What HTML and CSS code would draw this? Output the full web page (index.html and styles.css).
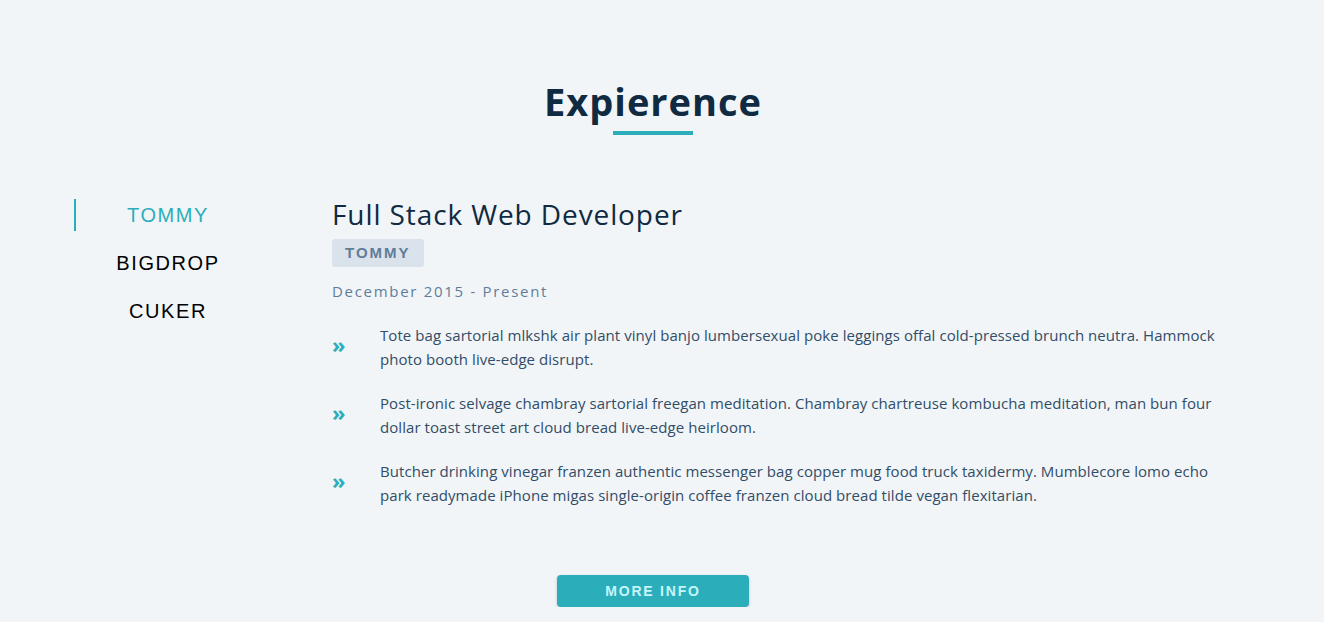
FILE: index.html
```html
<!DOCTYPE html>
<html lang="en">
<head>
<meta charset="utf-8">
<title>Experience</title>
<link rel="stylesheet" href="styles.css">
</head>
<body>
<section class="jobs">
  <h2 class="heading">Expierence</h2>
  <div class="underline"></div>
  <div class="jobs-center">
    <div class="btn-container">
      <button class="job-btn active-btn">TOMMY</button>
      <button class="job-btn">BIGDROP</button>
      <button class="job-btn">CUKER</button>
    </div>
    <article class="job-info">
      <h3 class="job-title">Full Stack Web Developer</h3>
      <h4 class="company">TOMMY</h4>
      <p class="job-date">December 2015 - Present</p>
      <div class="job-desc">
        <span class="job-icon">&raquo;</span>
        <p>Tote bag sartorial mlkshk air plant vinyl banjo lumbersexual poke leggings offal cold-pressed brunch neutra. Hammock photo booth live-edge disrupt.</p>
      </div>
      <div class="job-desc">
        <span class="job-icon">&raquo;</span>
        <p>Post-ironic selvage chambray sartorial freegan meditation. Chambray chartreuse kombucha meditation, man bun four dollar toast street art cloud bread live-edge heirloom.</p>
      </div>
      <div class="job-desc">
        <span class="job-icon">&raquo;</span>
        <p>Butcher drinking vinegar franzen authentic messenger bag copper mug food truck taxidermy. Mumblecore lomo echo park readymade iPhone migas single-origin coffee franzen cloud bread tilde vegan flexitarian.</p>
      </div>
    </article>
  </div>
  <div class="more">
    <button class="more-btn">MORE INFO</button>
  </div>
</section>
</body>
</html>
```
FILE: styles.css
```css
* { box-sizing: border-box; margin: 0; padding: 0; }
html, body { background: #f1f5f8; }
body {
  font-family: "Open Sans", "Noto Sans", sans-serif;
  color: #102a42;
}
.jobs { padding-top: 76px; padding-right: 18px; }
.heading {
  text-align: center;
  font-size: 38px;
  font-weight: 700;
  letter-spacing: 1px;
  line-height: 50px;
  color: #102a42;
}
.underline {
  width: 80px;
  height: 4px;
  background: #2caeba;
  margin: 5px auto 0;
}
.jobs-center {
  display: flex;
  margin-top: 64px;
  padding-left: 74px;
}
.btn-container {
  width: 186px;
  display: flex;
  flex-direction: column;
  flex-shrink: 0;
  margin-right: 72px;
}
.job-btn {
  background: transparent;
  border: none;
  border-left: 2px solid transparent;
  font-family: "Liberation Sans", Arial, sans-serif;
  font-size: 20px;
  letter-spacing: 1.6px;
  color: #000;
  height: 32px;
  margin-bottom: 16px;
  text-align: center;
}
.active-btn {
  color: #2caeba;
  border-left-color: #2caeba;
}
.job-info { width: 890px; }
.job-title {
  font-weight: 400;
  font-size: 28px;
  letter-spacing: 0.9px;
  line-height: 30px;
  color: #102a42;
}
.company {
  display: inline-block;
  margin-top: 10px;
  background: #dae2ec;
  color: #617d98;
  font-family: "Liberation Sans", Arial, sans-serif;
  font-weight: 700;
  font-size: 15px;
  letter-spacing: 2px;
  padding: 6px 13px;
  border-radius: 3px;
  line-height: 16px;
}
.job-date {
  margin-top: 14px;
  font-size: 15px;
  letter-spacing: 1.7px;
  color: #617d98;
  line-height: 20px;
}
.job-desc {
  display: grid;
  grid-template-columns: 48px 1fr;
  align-items: center;
  margin-top: 22px;
}
.job-desc + .job-desc { margin-top: 20px; }
.job-icon {
  color: #2caeba;
  font-size: 22px;
  font-weight: 700;
  line-height: 1;
  position: relative;
  top: -3px;
}
.job-desc p {
  font-size: 15px;
  letter-spacing: 0.06px;
  line-height: 24px;
  color: #324d67;
}
.more {
  display: flex;
  justify-content: center;
  margin-top: 68px;
}
.more-btn {
  width: 192px;
  height: 32px;
  background: #2caeba;
  color: #c5f6fa;
  border: none;
  border-radius: 4px;
  font-family: "Liberation Sans", Arial, sans-serif;
  font-weight: 700;
  font-size: 14px;
  letter-spacing: 1.8px;
  box-shadow: 0 1px 3px rgba(0,0,0,0.2);
}
```
